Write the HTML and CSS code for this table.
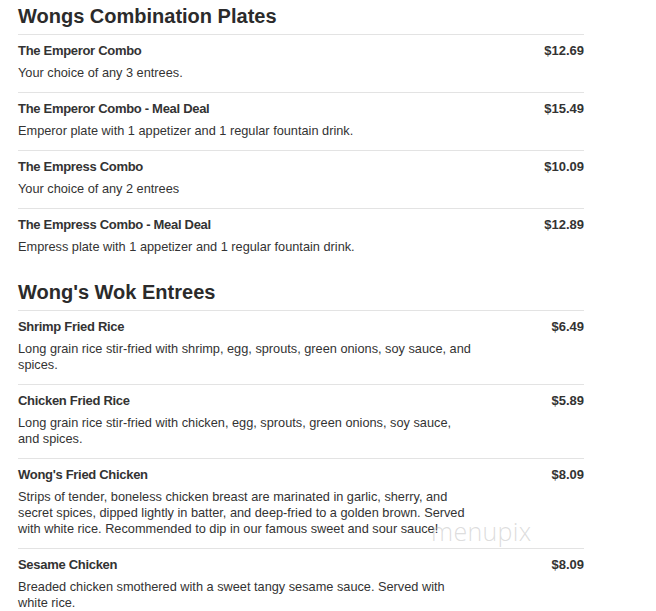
FILE: index.html
```html
<!DOCTYPE html>
<html>
<head>
<meta charset="utf-8">
<link rel="stylesheet" href="styles.css">
</head>
<body>
<div class="menu">
  <section class="section">
    <h2 class="section-title">Wongs Combination Plates</h2>
    <div class="item">
      <div class="item-main">
        <div class="item-name">The Emperor Combo</div>
        <div class="item-desc">Your choice of any 3 entrees.</div>
      </div>
      <div class="item-price">$12.69</div>
    </div>
    <div class="item">
      <div class="item-main">
        <div class="item-name">The Emperor Combo - Meal Deal</div>
        <div class="item-desc">Emperor plate with 1 appetizer and 1 regular fountain drink.</div>
      </div>
      <div class="item-price">$15.49</div>
    </div>
    <div class="item">
      <div class="item-main">
        <div class="item-name">The Empress Combo</div>
        <div class="item-desc">Your choice of any 2 entrees</div>
      </div>
      <div class="item-price">$10.09</div>
    </div>
    <div class="item">
      <div class="item-main">
        <div class="item-name">The Empress Combo - Meal Deal</div>
        <div class="item-desc">Empress plate with 1 appetizer and 1 regular fountain drink.</div>
      </div>
      <div class="item-price">$12.89</div>
    </div>
  </section>
  <section class="section">
    <h2 class="section-title">Wong's Wok Entrees</h2>
    <div class="item">
      <div class="item-main">
        <div class="item-name">Shrimp Fried Rice</div>
        <div class="item-desc">Long grain rice stir-fried with shrimp, egg, sprouts, green onions, soy sauce, and spices.</div>
      </div>
      <div class="item-price">$6.49</div>
    </div>
    <div class="item">
      <div class="item-main">
        <div class="item-name">Chicken Fried Rice</div>
        <div class="item-desc">Long grain rice stir-fried with chicken, egg, sprouts, green onions, soy sauce, and spices.</div>
      </div>
      <div class="item-price">$5.89</div>
    </div>
    <div class="item">
      <div class="item-main">
        <div class="item-name">Wong's Fried Chicken</div>
        <div class="item-desc">Strips of tender, boneless chicken breast are marinated in garlic, sherry, and secret spices, dipped lightly in batter, and deep-fried to a golden brown. Served with white rice. Recommended to dip in our famous sweet and sour sauce!</div>
      </div>
      <div class="item-price">$8.09</div>
      <span class="watermark">menupix</span>
    </div>
    <div class="item">
      <div class="item-main">
        <div class="item-name">Sesame Chicken</div>
        <div class="item-desc">Breaded chicken smothered with a sweet tangy sesame sauce. Served with white rice.</div>
      </div>
      <div class="item-price">$8.09</div>
    </div>
  </section>
</div>
</body>
</html>
```
FILE: styles.css
```css
html, body {
  margin: 0;
  padding: 0;
  background: #fff;
}
body {
  font-family: "Liberation Sans", Arial, sans-serif;
  color: #333;
}
.menu {
  width: 566px;
  padding: 4px 0 0 18px;
}
.section {
  margin-bottom: 14px;
}
.section-title {
  margin: 0;
  font-size: 20px;
  line-height: 24px;
  font-weight: bold;
  color: #2b2b2b;
  padding-bottom: 6px;
}
.item {
  position: relative;
  display: flex;
  justify-content: space-between;
  align-items: flex-start;
  border-top: 1px solid #e3e3e3;
  padding: 7px 0 11px;
}
.item-main {
  width: 455px;
}
.item-name {
  font-size: 13px;
  line-height: 18px;
  font-weight: bold;
  letter-spacing: -0.3px;
  color: #333;
}
.item-desc {
  margin-top: 5px;
  font-size: 12.75px;
  line-height: 16px;
  color: #333;
}
.item-price {
  font-size: 13px;
  line-height: 18px;
  font-weight: bold;
  color: #333;
}
.watermark {
  position: absolute;
  left: 413px;
  top: 57px;
  font-family: "Open Sans", sans-serif;
  font-weight: 300;
  font-size: 25px;
  line-height: 30px;
  color: rgba(180, 180, 180, 0.45);
  letter-spacing: 0.3px;
}
```
